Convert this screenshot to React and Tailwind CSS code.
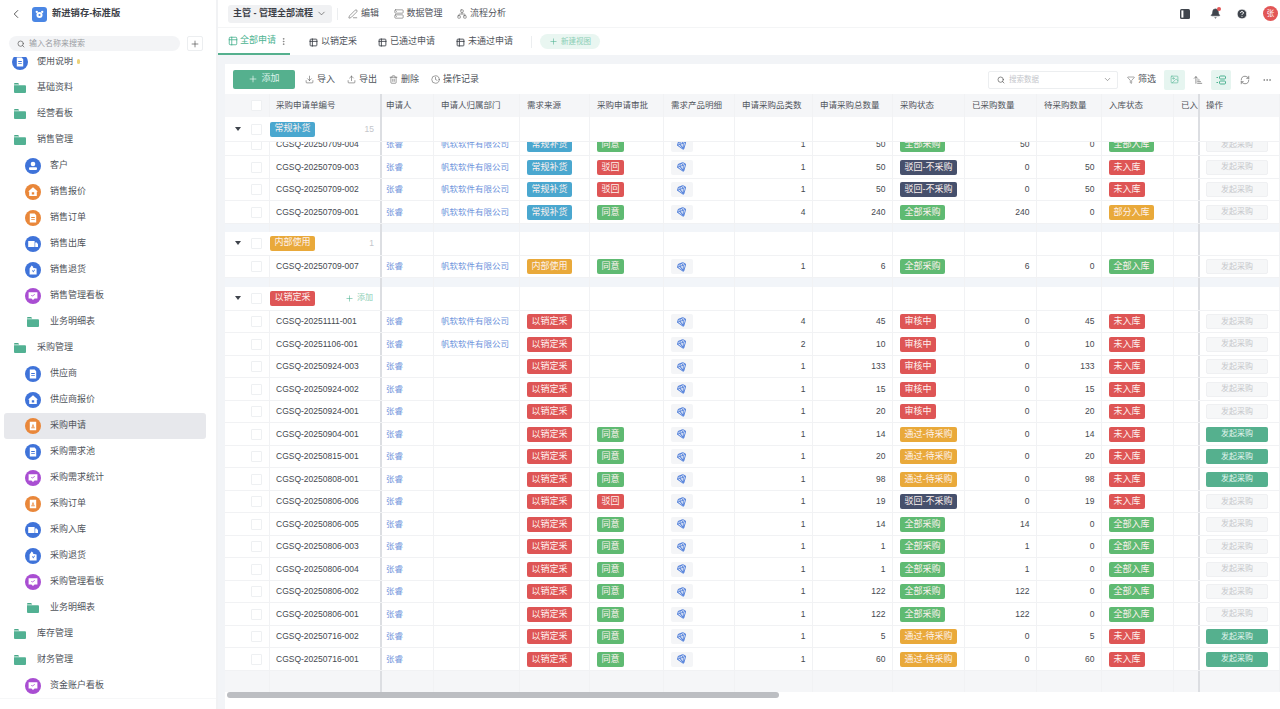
import React from 'react';
import {
  ChevronLeft, ChevronDown, Search, Plus, PenLine, Server, Network, Table2, Download, Upload,
  Trash2, Clock, Funnel, ArrowUpNarrowWide, RefreshCw, Ellipsis, EllipsisVertical, Bell, CircleHelp, Gem,
  Image as ImageIcon,
} from 'lucide-react';

const FONT = "font-['Liberation_Sans','Noto_Sans_CJK_SC',sans-serif]";
const GRID = 'grid grid-cols-[45px_112px_52px_86px_70px_74px_71px_78px_80px_72px_72px_65px_72px_26px_80px]';

const TAG_COLORS = {
  常规补货: 'bg-[#4aa7cf]',
  内部使用: 'bg-[#e9a93a]',
  以销定采: 'bg-[#de5555]',
  同意: 'bg-[#5fba72]',
  驳回: 'bg-[#de5555]',
  全部采购: 'bg-[#5fba72]',
  '驳回-不采购': 'bg-[#46506c]',
  审核中: 'bg-[#de5555]',
  '通过-待采购': 'bg-[#e9a93a]',
  全部入库: 'bg-[#5fba72]',
  未入库: 'bg-[#de5555]',
  部分入库: 'bg-[#e9a93a]',
};

const COMPANY = '帆软软件有限公司';

const RESTOCK = [
  ['CGSQ-20250709-003', COMPANY, '常规补货', '驳回', 1, 50, '驳回-不采购', 0, 50, '未入库', false],
  ['CGSQ-20250709-002', COMPANY, '常规补货', '驳回', 1, 50, '驳回-不采购', 0, 50, '未入库', false],
  ['CGSQ-20250709-001', COMPANY, '常规补货', '同意', 4, 240, '全部采购', 240, 0, '部分入库', false],
];
const CLIPPED = ['CGSQ-20250709-004', COMPANY, '常规补货', '同意', 1, 50, '全部采购', 50, 0, '全部入库', false];
const INTERNAL = [
  ['CGSQ-20250709-007', COMPANY, '内部使用', '同意', 1, 6, '全部采购', 6, 0, '全部入库', false],
];
const TO_ORDER = [
  ['CGSQ-20251111-001', COMPANY, '以销定采', '', 4, 45, '审核中', 0, 45, '未入库', false],
  ['CGSQ-20251106-001', COMPANY, '以销定采', '', 2, 10, '审核中', 0, 10, '未入库', false],
  ['CGSQ-20250924-003', '', '以销定采', '', 1, 133, '审核中', 0, 133, '未入库', false],
  ['CGSQ-20250924-002', '', '以销定采', '', 1, 15, '审核中', 0, 15, '未入库', false],
  ['CGSQ-20250924-001', '', '以销定采', '', 1, 20, '审核中', 0, 20, '未入库', false],
  ['CGSQ-20250904-001', '', '以销定采', '同意', 1, 14, '通过-待采购', 0, 14, '未入库', true],
  ['CGSQ-20250815-001', '', '以销定采', '同意', 1, 20, '通过-待采购', 0, 20, '未入库', true],
  ['CGSQ-20250808-001', '', '以销定采', '同意', 1, 98, '通过-待采购', 0, 98, '未入库', true],
  ['CGSQ-20250806-006', '', '以销定采', '驳回', 1, 19, '驳回-不采购', 0, 19, '未入库', false],
  ['CGSQ-20250806-005', '', '以销定采', '同意', 1, 14, '全部采购', 14, 0, '全部入库', false],
  ['CGSQ-20250806-003', '', '以销定采', '同意', 1, 1, '全部采购', 1, 0, '全部入库', false],
  ['CGSQ-20250806-004', '', '以销定采', '同意', 1, 1, '全部采购', 1, 0, '全部入库', false],
  ['CGSQ-20250806-002', '', '以销定采', '同意', 1, 122, '全部采购', 122, 0, '全部入库', false],
  ['CGSQ-20250806-001', '', '以销定采', '同意', 1, 122, '全部采购', 122, 0, '全部入库', false],
  ['CGSQ-20250716-002', '', '以销定采', '同意', 1, 5, '通过-待采购', 0, 5, '未入库', true],
  ['CGSQ-20250716-001', '', '以销定采', '同意', 1, 60, '通过-待采购', 0, 60, '未入库', true],
];

const HEADERS = [
  '', '采购申请单编号', '申请人', '申请人归属部门', '需求来源', '采购申请审批', '需求产品明细', '申请采购品类数',
  '申请采购总数量', '采购状态', '已采购数量', '待采购数量', '入库状态', '已入库数量', '操作',
];

const NAV = [
  { label: '使用说明', type: 'doc', color: 'blue', top: true, star: true },
  { label: '基础资料', type: 'folder' },
  { label: '经营看板', type: 'folder' },
  { label: '销售管理', type: 'folder' },
  { label: '客户', type: 'user', color: 'blue' },
  { label: '销售报价', type: 'home', color: 'orange' },
  { label: '销售订单', type: 'doc', color: 'orange' },
  { label: '销售出库', type: 'truck', color: 'blue' },
  { label: '销售退货', type: 'bag', color: 'blue' },
  { label: '销售管理看板', type: 'board', color: 'purple' },
  { label: '业务明细表', type: 'folder', nested: true },
  { label: '采购管理', type: 'folder' },
  { label: '供应商', type: 'doc', color: 'blue' },
  { label: '供应商报价', type: 'home', color: 'blue' },
  { label: '采购申请', type: 'alert', color: 'orange', active: true },
  { label: '采购需求池', type: 'doc', color: 'blue' },
  { label: '采购需求统计', type: 'board', color: 'purple' },
  { label: '采购订单', type: 'alert', color: 'orange' },
  { label: '采购入库', type: 'truck', color: 'blue' },
  { label: '采购退货', type: 'bag', color: 'blue' },
  { label: '采购管理看板', type: 'board', color: 'purple' },
  { label: '业务明细表', type: 'folder', nested: true },
  { label: '库存管理', type: 'folder' },
  { label: '财务管理', type: 'folder' },
  { label: '资金账户看板', type: 'board', color: 'purple' },
];

const CIRCLE = { blue: 'bg-[#3f73d9]', orange: 'bg-[#e9873a]', purple: 'bg-[#a94ed2]' };

function Glyph({ type }) {
  return (
    <svg viewBox="0 0 16 16" className="w-4 h-4" fill="#fff">
      {type === 'user' && (
        <>
          <circle cx="8" cy="6" r="2.3" />
          <rect x="4" y="9.2" width="8" height="2.8" rx="1" />
        </>
      )}
      {type === 'home' && <path fillRule="evenodd" d="M8 3.2 12.8 7.4 11.8 7.8V12H4.2V7.8L3.2 7.4ZM6.8 8.2V10.6H9.2V8.2Z" />}
      {type === 'doc' && <path fillRule="evenodd" d="M4.8 3.6H9.6L11.2 5.2V12.4H4.8ZM6.2 7V7.9H9.8V7ZM6.2 9.2V10.1H9.8V9.2Z" />}
      {type === 'alert' && <path fillRule="evenodd" d="M4.8 3.8H11.2V12.2H4.8ZM8 5.8 6.2 10.2H9.8ZM8 7.6 8.7 9.4H7.3Z" />}
      {type === 'truck' && <path d="M3.2 5H9.6V11H3.2ZM10.2 6.6H11.8L13 8.2V11H10.2Z" />}
      {type === 'bag' && <path fillRule="evenodd" d="M6.6 3.4 8.4 5 7.8 5.7 11.6 6.6V12.4H4.6V6.4ZM7 8.2 8.2 10.4 10 8 9.4 7.6 8.1 9.2 7.6 7.9Z" />}
      {type === 'board' && <path fillRule="evenodd" d="M3.6 4.2H12.4V10.4H9.6L8 12 6.4 10.4H3.6ZM6 7.6 7.4 8.6 10 6.6 9.6 6.1 7.4 7.7 6.4 7Z" />}
    </svg>
  );
}

function Folder() {
  return (
    <svg viewBox="0 0 12 10" className="w-3 h-2.5 shrink-0">
      <path d="M0 1a1 1 0 0 1 1-1h3.2l1 1.4H0Z" fill="#4aa98a" />
      <path d="M0 2.2h11a1 1 0 0 1 1 1V9a1 1 0 0 1-1 1H1a1 1 0 0 1-1-1Z" fill="#52b193" />
    </svg>
  );
}

function NavItem({ item }) {
  const isFolder = item.type === 'folder';
  let pad = 'pl-[21px] gap-[9px]';
  if (item.top) pad = 'pl-[8px] gap-[9px]';
  else if (isFolder && item.nested) pad = 'pl-[23px] gap-[11px]';
  else if (isFolder) pad = 'pl-[10px] gap-[11px]';
  return (
    <div className={`flex items-center h-[26px] w-[202px] ml-[4px] rounded-[3px] ${pad} ${item.active ? 'bg-[#e7e8ec]' : ''}`}>
      {isFolder ? (
        <Folder />
      ) : (
        <span className={`flex items-center justify-center w-4 h-4 rounded-full shrink-0 ${CIRCLE[item.color]}`}>
          <Glyph type={item.type} />
        </span>
      )}
      <span className="text-[9px] text-[#50545b] whitespace-nowrap">{item.label}</span>
      {item.star && <span className="-ml-[5px] w-[3px] h-[5px] rounded-full bg-[#ecd27a]" />}
    </div>
  );
}

function Sidebar() {
  return (
    <aside className="w-[218px] h-[709px] shrink-0 bg-white border-r-2 border-[#f1f2f4] flex flex-col">
      <div className="flex items-center h-[28px] pl-[9px]">
        <ChevronLeft className="w-[14px] h-[14px] text-[#444]" strokeWidth={1.5} />
        <div className="ml-[9px] w-[15px] h-[15px] rounded-[3px] bg-[#4a86e4] flex items-center justify-center">
          <svg viewBox="0 0 10 10" className="w-[9px] h-[9px]" fill="#fff">
            <circle cx="2" cy="2" r="1.3" />
            <circle cx="8" cy="2" r="1.3" />
            <path fillRule="evenodd" d="M5 2.2a3.4 3.4 0 1 1 0 6.8 3.4 3.4 0 0 1 0-6.8Zm0 2.2a1.2 1.2 0 1 0 0 2.4 1.2 1.2 0 0 0 0-2.4Z" />
          </svg>
        </div>
        <span className="ml-[5px] text-[9.3px] font-bold text-[#3c4047]">新进销存-标准版</span>
      </div>
      <div className="flex items-center h-[29px] pl-[9px] pt-[2px]">
        <div className="flex items-center w-[171px] h-[15px] rounded-full bg-[#f3f4f6] pl-[8px] gap-[4px]">
          <Search className="w-[8px] h-[8px] text-[#555]" strokeWidth={2} />
          <span className="text-[8px] text-[#9a9da3]">输入名称来搜索</span>
        </div>
        <div className="ml-[7px] w-[16px] h-[15px] rounded-[2px] border border-[#eceef0] flex items-center justify-center">
          <Plus className="w-[10px] h-[10px] text-[#444]" strokeWidth={1.5} />
        </div>
      </div>
      <div className="h-[641px] overflow-hidden">
        <div className="-mt-[8.5px]">
          {NAV.map((item, i) => (
            <NavItem key={i} item={item} />
          ))}
        </div>
      </div>
      <div className="flex-1 border-t border-[#f6f7f8]" />
    </aside>
  );
}

function TopBar() {
  const links = [
    ['编辑', PenLine],
    ['数据管理', Server],
    ['流程分析', Network],
  ];
  return (
    <div className="flex items-center h-[28px] pl-[10px] pr-[2px] bg-white border-b border-[#f4f5f6]">
      <div className="flex items-center h-[18px] w-[104px] rounded-[3px] bg-[#f0f1f3] pl-[5px] gap-[3px]">
        <span className="text-[9px] font-bold text-[#3c4047] whitespace-nowrap">主管 - 管理全部流程</span>
        <ChevronDown className="w-[11px] h-[11px] text-[#555]" strokeWidth={1.5} />
      </div>
      <div className="ml-[5px] w-px h-[12px] bg-[#eceef0]" />
      <div className="flex items-center ml-[10px] gap-[14.5px]">
        {links.map(([label, Icon]) => (
          <div key={label} className="flex items-center gap-[3px]">
            <Icon className="w-[10px] h-[10px] text-[#666]" strokeWidth={1.5} />
            <span className="text-[9px] text-[#50545b]">{label}</span>
          </div>
        ))}
      </div>
      <div className="flex items-center ml-auto">
        <svg viewBox="0 0 10 10" className="w-[10px] h-[10px]">
          <rect width="10" height="10" rx="1.5" fill="#3f444c" />
          <rect x="1.4" y="1.4" width="2" height="7.2" fill="#fff" />
        </svg>
        <div className="relative ml-[20px]">
          <Bell className="w-[11px] h-[11px] text-[#3f444c]" fill="#3f444c" strokeWidth={1.5} />
          <span className="absolute -top-[1px] right-0 w-[4px] h-[4px] rounded-full bg-[#e25656]" />
        </div>
        <CircleHelp className="ml-[15px] w-[12px] h-[12px] text-white" fill="#3f444c" strokeWidth={2} />
        <span className="ml-[15px] w-[15px] h-[15px] rounded-full bg-[#e25656] flex items-center justify-center text-[7.5px] text-white">张</span>
      </div>
    </div>
  );
}

function Tabs() {
  const tabs = ['以销定采', '已通过申请', '未通过申请'];
  return (
    <div className="flex items-center h-[27px] bg-white">
      <div className="flex items-center h-full w-[72px] pl-[10px] pt-[1px] border-b-2 border-[#55b08e]">
        <Table2 className="w-[10px] h-[10px] text-[#4cb391]" strokeWidth={2} />
        <span className="ml-[2px] text-[9px] text-[#4cb391] whitespace-nowrap">全部申请</span>
        <EllipsisVertical className="ml-[3px] w-[9px] h-[9px] text-[#777]" strokeWidth={2} />
      </div>
      {tabs.map((label, i) => (
        <div key={label} className={`flex items-center gap-[3px] pt-[1px] ${i === 0 ? 'ml-[19px]' : 'ml-[21px]'}`}>
          <Table2 className="w-[9px] h-[9px] text-[#3f444c]" strokeWidth={2.4} />
          <span className="text-[9px] text-[#50545b] whitespace-nowrap">{label}</span>
        </div>
      ))}
      <div className="ml-[18px] w-px h-[12px] bg-[#eceef0]" />
      <div className="ml-[8px] flex items-center justify-center gap-[3px] w-[60px] h-[15px] rounded-full bg-[#e9f6f1]">
        <Plus className="w-[9px] h-[9px] text-[#4cb391]" strokeWidth={1.5} />
        <span className="text-[7.5px] text-[#8ccfb6]">新建视图</span>
      </div>
    </div>
  );
}

function Toolbar() {
  const actions = [
    ['导入', Download],
    ['导出', Upload],
    ['删除', Trash2],
    ['操作记录', Clock],
  ];
  return (
    <div className="flex items-center h-[30px] pl-[8px] pt-[1px]">
      <div className="flex items-center justify-center gap-[3px] w-[62px] h-[19px] -mt-[1px] rounded-[2px] bg-[#55b08e]">
        <Plus className="w-[10px] h-[10px] text-white" strokeWidth={1.5} />
        <span className="text-[9px] text-[#dff3eb]">添加</span>
      </div>
      <div className="flex items-center ml-[10px] gap-[12px]">
        {actions.map(([label, Icon]) => (
          <div key={label} className="flex items-center gap-[3px]">
            <Icon className="w-[9px] h-[9px] text-[#555]" strokeWidth={1.5} />
            <span className="text-[9px] text-[#50545b]">{label}</span>
          </div>
        ))}
      </div>
      <div className="flex items-center ml-auto mr-[8px]">
        <div className="flex items-center w-[130px] h-[18px] rounded-[2px] border border-[#eceef0] pl-[8px] pr-[5px]">
          <Search className="w-[8px] h-[8px] text-[#555]" strokeWidth={2} />
          <span className="ml-[4px] text-[7.5px] text-[#c4c6cb]">搜索数据</span>
          <ChevronDown className="ml-auto w-[9px] h-[9px] text-[#666]" strokeWidth={1.5} />
        </div>
        <Funnel className="ml-[9px] w-[8px] h-[8px] text-[#555]" strokeWidth={1.5} />
        <span className="ml-[3px] text-[9px] text-[#50545b]">筛选</span>
        <div className="ml-[8px] w-[21px] h-[20px] rounded-[2px] bg-[#e6f5f0] flex items-center justify-center">
          <ImageIcon className="w-[9px] h-[9px] text-[#4cb391]" strokeWidth={1.5} />
        </div>
        <ArrowUpNarrowWide className="ml-[8px] w-[10px] h-[10px] text-[#555]" strokeWidth={1.5} />
        <div className="ml-[8px] w-[20px] h-[20px] rounded-[2px] bg-[#e6f5f0] flex items-center justify-center">
          <svg viewBox="0 0 10 10" className="w-[10px] h-[10px]" fill="none" stroke="#4cb391" strokeWidth="1">
            <rect x="3.5" y="1" width="6" height="3" rx="1" />
            <rect x="3.5" y="6" width="6" height="3" rx="1" />
            <path d="M0.5 2.5h1.5M0.5 7.5h1.5" />
          </svg>
        </div>
        <RefreshCw className="ml-[9px] w-[10px] h-[10px] text-[#555]" strokeWidth={1.5} />
        <Ellipsis className="ml-[12px] w-[10px] h-[10px] text-[#666]" strokeWidth={1.5} />
      </div>
    </div>
  );
}

function Tag({ label }) {
  return (
    <span className={`inline-flex items-center h-[15px] px-[4.5px] rounded-[2px] text-[9px] text-[#fdf1ee] whitespace-nowrap ${TAG_COLORS[label]}`}>
      {label}
    </span>
  );
}

function Cell({ col, className = '', children }) {
  let divider = 'border-r border-[#f1f2f4]';
  if (col === 1 || col === 13) divider = 'border-r-2 border-[#dcdee2]';
  return <div className={`flex items-center min-w-0 overflow-hidden ${divider} ${className}`}>{children}</div>;
}

function Checkbox() {
  return <span className="block w-[11px] h-[11px] rounded-[1px] border border-[#eef0f2] bg-white" />;
}

function DataRow({ row }) {
  const [no, dept, source, approval, kinds, total, status, bought, pending, stock, active] = row;
  const num = 'justify-end pr-[6.5px] text-[8.5px] text-[#45494f]';
  return (
    <div className={`${GRID} h-[22.5px] shrink-0 bg-white border-b border-[#f1f2f4] [&>div]:pt-[1px]`}>
      <Cell col={0} className="pl-[26px]"><Checkbox /></Cell>
      <Cell col={1} className="pl-[6px] text-[8.5px] text-[#45494f]">{no}</Cell>
      <Cell col={2} className="pl-[4px] text-[8.5px] text-[#6f95dc]">张睿</Cell>
      <Cell col={3} className="pl-[7px] text-[8.5px] text-[#6f95dc] whitespace-nowrap">{dept}</Cell>
      <Cell col={4} className="pl-[7px]"><Tag label={source} /></Cell>
      <Cell col={5} className="pl-[7px]">{approval && <Tag label={approval} />}</Cell>
      <Cell col={6} className="pl-[7px]">
        <span className="flex items-center justify-center w-[22px] h-[15px] rounded-[2px] bg-[#f4f5f7]">
          <Gem className="w-[10px] h-[10px] text-[#5b87dd] rotate-[-20deg]" strokeWidth={2.4} />
        </span>
      </Cell>
      <Cell col={7} className={num}>{kinds}</Cell>
      <Cell col={8} className={num}>{total}</Cell>
      <Cell col={9} className="pl-[7px]"><Tag label={status} /></Cell>
      <Cell col={10} className={num}>{bought}</Cell>
      <Cell col={11} className={num}>{pending}</Cell>
      <Cell col={12} className="pl-[7px]"><Tag label={stock} /></Cell>
      <Cell col={13} />
      <Cell col={14} className="pl-[6px]">
        {active ? (
          <span className="flex items-center justify-center w-[62px] h-[15px] rounded-[2px] bg-[#55b08e] text-[8px] text-[#e2f5ee]">发起采购</span>
        ) : (
          <span className="flex items-center justify-center w-[62px] h-[15px] rounded-[2px] bg-[#f6f7f8] border border-[#eff0f2] text-[8px] text-[#c6c8cc]">发起采购</span>
        )}
      </Cell>
    </div>
  );
}

function GroupRow({ label, count, showAdd, height }) {
  return (
    <div className={`${GRID} ${height} shrink-0 bg-white border-b border-[#f1f2f4]`}>
      <Cell col={1} className="col-span-2">
        <svg viewBox="0 0 6 4" className="ml-[10px] w-[6px] h-[4px]" fill="#3f444c"><path d="M0 0h6L3 4Z" /></svg>
        <span className="flex ml-[10px]"><Checkbox /></span>
        <span className="flex ml-[8px]"><Tag label={label} /></span>
        {showAdd ? (
          <span className="ml-auto mr-[7px] flex items-center gap-[3px]">
            <Plus className="w-[9px] h-[9px] text-[#4cb391]" strokeWidth={1.5} />
            <span className="text-[8px] text-[#8ccfb6]">添加</span>
          </span>
        ) : (
          <span className="ml-auto mr-[6px] text-[8.5px] text-[#c4c6cb]">{count}</span>
        )}
      </Cell>
      {HEADERS.slice(2).map((_, i) => (
        <Cell key={i} col={i + 2} />
      ))}
    </div>
  );
}

function GapRow({ height, bg }) {
  return (
    <div className={`${GRID} ${height} ${bg} shrink-0`}>
      {HEADERS.map((_, i) => (
        <Cell key={i} col={i} />
      ))}
    </div>
  );
}

function headerPad(i) {
  if (i === 1 || i === 14) return 'pl-[6px]';
  if (i === 2) return 'pl-[4px]';
  return 'pl-[7px]';
}

function DataTable() {
  return (
    <div className="flex flex-col">
      <div className={`${GRID} h-[23px] bg-[#f5f6f8]`}>
        {HEADERS.map((h, i) => (
          <Cell key={i} col={i} className={i === 0 ? 'pl-[26px]' : headerPad(i)}>
            {i === 0 ? <Checkbox /> : <span className="text-[8.5px] text-[#50545b] whitespace-nowrap">{h}</span>}
          </Cell>
        ))}
      </div>
      <GroupRow label="常规补货" count="15" height="h-[25px]" />
      <div className="h-[14px] shrink-0 overflow-hidden flex flex-col justify-end">
        <DataRow row={CLIPPED} />
      </div>
      {RESTOCK.map((r) => <DataRow key={r[0]} row={r} />)}
      <GapRow height="h-[8px]" bg="bg-[#f2f5f9]" />
      <GroupRow label="内部使用" count="1" height="h-[24px]" />
      {INTERNAL.map((r) => <DataRow key={r[0]} row={r} />)}
      <GapRow height="h-[8.5px]" bg="bg-[#f2f5f9]" />
      <GroupRow label="以销定采" showAdd height="h-[24px]" />
      {TO_ORDER.map((r) => <DataRow key={r[0]} row={r} />)}
      <GapRow height="h-[21.5px]" bg="bg-[#f5f6f8]" />
      <div className="h-[6px] pl-[2px] bg-white">
        <div className="w-[552px] h-full rounded-full bg-[#bcbec2]" />
      </div>
    </div>
  );
}

export default function App() {
  return (
    <div className={`${FONT} flex w-[1280px] h-[709px] overflow-hidden bg-white`}>
      <Sidebar />
      <main className="flex-1 min-w-0 flex flex-col">
        <TopBar />
        <Tabs />
        <div className="flex-1 bg-[#f2f4f7] pt-[9px] pl-[7px]">
          <div className="h-full bg-white">
            <Toolbar />
            <DataTable />
          </div>
        </div>
      </main>
    </div>
  );
}
